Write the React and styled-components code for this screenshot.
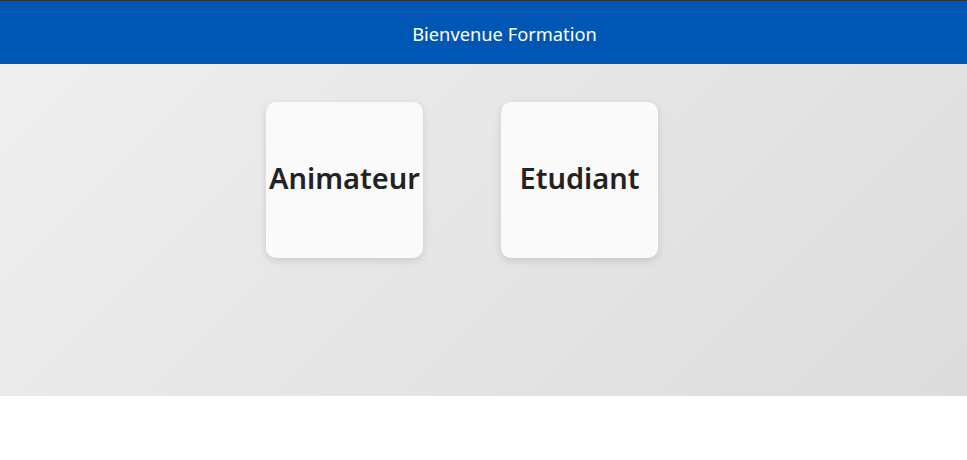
import React from 'react'
import styled, { createGlobalStyle } from 'styled-components'

const GlobalStyle = createGlobalStyle`
  body {
    margin: 0;
    font-family: 'Noto Sans', 'Open Sans', sans-serif;
    background: #fff;
  }
`

const Header = styled.header`
  height: 63px;
  border-top: 1px solid #333;
  background: #0057b3;
  color: #fff;
  display: flex;
  align-items: center;
  justify-content: center;
  font-size: 18.3px;
  padding: 2px 0 0 42px;
  box-sizing: border-box;
  height: 64px;
`

const Main = styled.main`
  height: 332px;
  box-sizing: border-box;
  background: linear-gradient(135deg, #efefef 0%, #dcdcdc 100%);
  display: flex;
  justify-content: center;
  align-items: flex-start;
  gap: 78px;
  padding: 38px 43px 0 0;
`

const Card = styled.button`
  width: 157px;
  height: 156px;
  border: none;
  border-radius: 10px;
  background: #fafafa;
  box-shadow: 0 3px 8px rgba(0, 0, 0, 0.12);
  display: flex;
  align-items: center;
  justify-content: center;
  padding: 0 0 6px;
  font-family: inherit;
  font-size: 29px;
  font-weight: 600;
  color: #222;
  cursor: pointer;
  white-space: nowrap;
  overflow: visible;
`

export default function App() {
  return (
    <>
      <GlobalStyle />
      <Header>Bienvenue Formation</Header>
      <Main>
        <Card>Animateur</Card>
        <Card>Etudiant</Card>
      </Main>
    </>
  )
}
